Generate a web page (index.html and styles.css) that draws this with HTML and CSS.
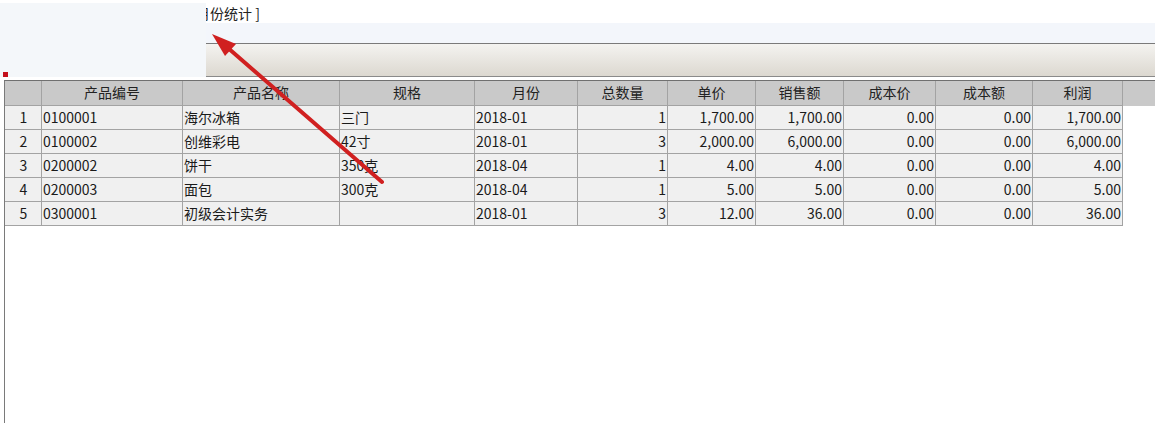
FILE: index.html
```html
<!DOCTYPE html>
<html lang="zh-CN">
<head>
<meta charset="utf-8">
<title>月份统计</title>
<link rel="stylesheet" href="styles.css">
</head>
<body>
<div class="page">
  <div class="titlebar"><span class="title">月份统计 ]</span></div>
  <div class="band"></div>
  <div class="toolbar"></div>
  <div class="grid">
    <div class="row head">
      <div class="c"></div>
      <div class="c">产品编号</div>
      <div class="c">产品名称</div>
      <div class="c">规格</div>
      <div class="c">月份</div>
      <div class="c">总数量</div>
      <div class="c">单价</div>
      <div class="c">销售额</div>
      <div class="c">成本价</div>
      <div class="c">成本额</div>
      <div class="c">利润</div>
    </div>
    <div class="row">
      <div class="c n">1</div><div class="c l">0100001</div><div class="c l">海尔冰箱</div><div class="c l">三门</div><div class="c l">2018-01</div>
      <div class="c r">1</div><div class="c r">1,700.00</div><div class="c r">1,700.00</div><div class="c r">0.00</div><div class="c r">0.00</div><div class="c r">1,700.00</div>
    </div>
    <div class="row">
      <div class="c n">2</div><div class="c l">0100002</div><div class="c l">创维彩电</div><div class="c l">42寸</div><div class="c l">2018-01</div>
      <div class="c r">3</div><div class="c r">2,000.00</div><div class="c r">6,000.00</div><div class="c r">0.00</div><div class="c r">0.00</div><div class="c r">6,000.00</div>
    </div>
    <div class="row">
      <div class="c n">3</div><div class="c l">0200002</div><div class="c l">饼干</div><div class="c l">350克</div><div class="c l">2018-04</div>
      <div class="c r">1</div><div class="c r">4.00</div><div class="c r">4.00</div><div class="c r">0.00</div><div class="c r">0.00</div><div class="c r">4.00</div>
    </div>
    <div class="row">
      <div class="c n">4</div><div class="c l">0200003</div><div class="c l">面包</div><div class="c l">300克</div><div class="c l">2018-04</div>
      <div class="c r">1</div><div class="c r">5.00</div><div class="c r">5.00</div><div class="c r">0.00</div><div class="c r">0.00</div><div class="c r">5.00</div>
    </div>
    <div class="row">
      <div class="c n">5</div><div class="c l">0300001</div><div class="c l">初级会计实务</div><div class="c l"></div><div class="c l">2018-01</div>
      <div class="c r">3</div><div class="c r">12.00</div><div class="c r">36.00</div><div class="c r">0.00</div><div class="c r">0.00</div><div class="c r">36.00</div>
    </div>
  </div>

  <div class="panel"><span class="mark"></span></div>

  <svg class="arrow" width="1155" height="423" viewBox="0 0 1155 423">
    <line x1="382" y1="182" x2="228" y2="48" stroke="#d02020" stroke-width="4" stroke-linecap="round"/>
    <polygon points="212,34 236,44 225,56" fill="#d02020"/>
  </svg>
</div>
</body>
</html>
```

FILE: styles.css
```css
* { box-sizing: border-box; }

html, body {
  margin: 0;
  padding: 0;
  background: #ffffff;
}

body {
  font-family: "Noto Sans CJK SC", "Noto Sans", sans-serif;
  font-size: 14px;
  color: #1a1a1a;
}

.page {
  position: relative;
  width: 1155px;
  height: 423px;
  overflow: hidden;
  display: flex;
  flex-direction: column;
}

.titlebar {
  height: 23px;
  padding: 3px 0 0 196px;
  line-height: 20px;
  background: #ffffff;
  font-size: 14px;
  color: #222;
}

.band {
  height: 20px;
  background: #f3f6fb;
}

.toolbar {
  height: 34px;
  border-top: 1px solid #7a7a7a;
  border-bottom: 1px solid #8a8a8a;
  background: linear-gradient(to bottom, #f4f3f0, #dcd8d0);
}

.grid {
  margin-top: 3px;
  margin-left: 4px;
  flex: 1;
  border-top: 1px solid #707070;
  border-left: 1px solid #7a7a7a;
  background: #ffffff;
}

.row {
  display: grid;
  grid-template-columns: 37px 141px 157px 135px 103px 90px 88px 88px 92px 97px 90px;
  height: 24px;
}

.row.head {
  height: 25px;
  background: #c9c9c9;
}

.c {
  border-right: 1px solid #a3a3a3;
  border-bottom: 1px solid #a3a3a3;
  background: #f0f0f0;
  line-height: 22px;
  white-space: nowrap;
  overflow: hidden;
}

.head .c {
  background: #c9c9c9;
  text-align: center;
  line-height: 23px;
  color: #222;
}

.n { text-align: center; padding-left: 1px; }
.l { text-align: left; padding-left: 1px; }
.r { text-align: right; padding-right: 1px; }

.panel {
  position: absolute;
  left: 0;
  top: 3px;
  width: 206px;
  height: 74px;
  background: #f4f7fa;
  display: flex;
  align-items: flex-end;
  padding: 0 0 0 3px;
}

.mark {
  width: 5px;
  height: 5px;
  background: #c4101c;
}

.arrow {
  position: absolute;
  left: 0;
  top: 0;
  pointer-events: none;
}
```
